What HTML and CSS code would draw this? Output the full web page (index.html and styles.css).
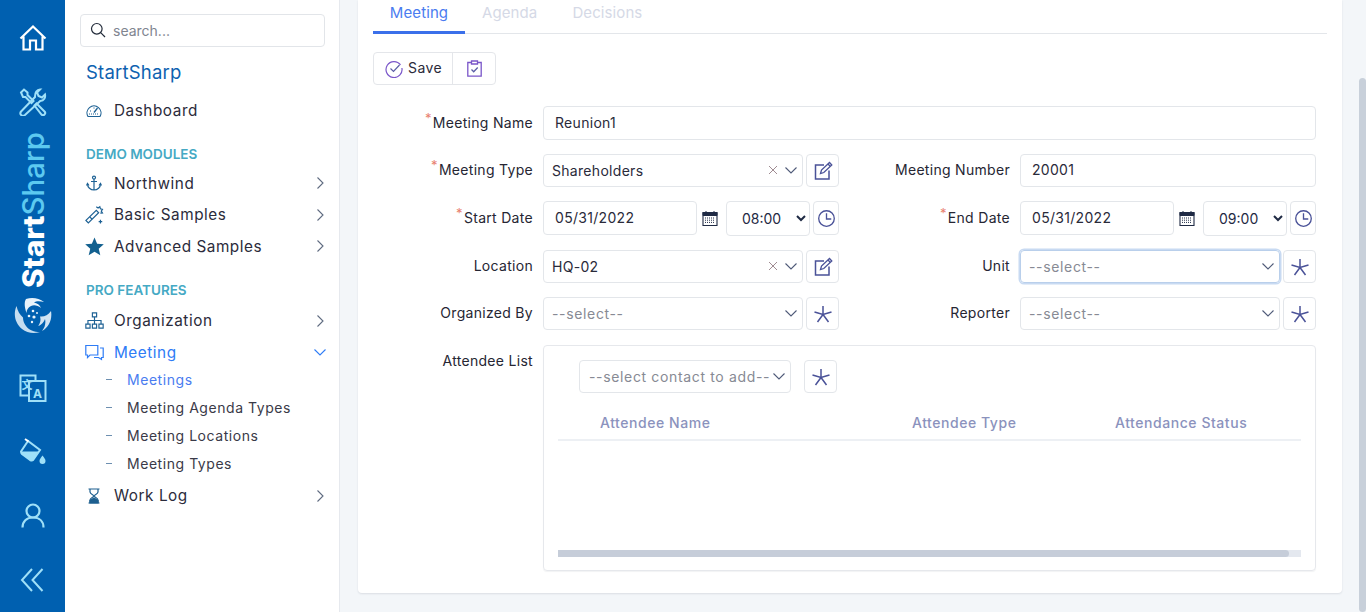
FILE: index.html
```html
<!DOCTYPE html>
<html lang="en">
<head>
    <meta charset="UTF-8">
    <title>Meeting - StartSharp</title>
    <link rel="stylesheet" href="styles.css">
</head>
<body>
    <svg class="defs" width="0" height="0">
        <symbol id="i-right" viewBox="0 0 10 14"><path d="M2.500 1.500 8 7l-5.500 5.500" fill="none" stroke="currentColor" stroke-width="1.100"/></symbol>
        <symbol id="i-down" viewBox="0 0 14 10"><path d="M1.500 2.500 7 8l5.500-5.500" fill="none" stroke="currentColor" stroke-width="1.100"/></symbol>
        <symbol id="i-x" viewBox="0 0 10 10"><path d="M1 1l8 8M9 1 1 9" fill="none" stroke="currentColor" stroke-width="1"/></symbol>
        <symbol id="i-edit" viewBox="0 0 20 20"><path d="M11 4H2.500v14h13.500V9.500" fill="none" stroke="currentColor" stroke-width="1.500"/><path d="M7.500 12.500l1-3.500 8-7.500 2.300 2.500-8 7.500zM15 3l2.400 2.500" fill="none" stroke="currentColor" stroke-width="1.300"/></symbol>
        <symbol id="i-star" viewBox="0 0 20 20"><path d="M10 2v8.500M1.500 8l8.500 2.500L18.500 8M10 10.500 4.500 18M10 10.500 15.500 18" fill="none" stroke="currentColor" stroke-width="1.500"/></symbol>
        <symbol id="i-clock" viewBox="0 0 20 20"><circle cx="10" cy="10" r="8.200" fill="none" stroke="currentColor" stroke-width="1.400"/><path d="M10 4.500V10.500H15" fill="none" stroke="currentColor" stroke-width="1.400"/></symbol>
        <symbol id="i-cal" viewBox="0 0 16 16"><path d="M1 2.500h14v13H1z" fill="none" stroke="currentColor" stroke-width="1.100"/><path d="M1 2.500h14V5.500H1zM4 1v2.500M12 1v2.500" fill="currentColor" stroke="currentColor" stroke-width="1"/><path d="M3 8h10M3 10.200h10M3 12.400h10" stroke="currentColor" stroke-width="1" stroke-dasharray="1 1"/></symbol>
    </svg>

    <div class="rail">
        <div class="rail-item">
            <svg class="rail-icon" viewBox="0 0 28 28"><path d="M1.500 14.500 14 2.500l12.500 12M4.500 12.500V25.500H11V16.500H17V25.500H23.500V12.500" fill="none" stroke="#fff" stroke-width="2.200"/></svg>
        </div>
        <div class="rail-item">
            <svg class="rail-icon" viewBox="0 0 28 28" fill="none" stroke="#9fe0f8" stroke-width="2"><path d="M2 4.500 5 1.500l3.500 3v2.500l6 6-2 2-6-6H4z"/><path d="M15.500 17.500l2-2 8 8c1 1 1 2 0 3s-2 1-3 0z"/><path d="M21 1.500l-3 3 1.500 3.500 3.500 1.500 3-3c.6 3-.8 6.200-4.800 6.500L6 27c-1.500 1-3 1-4-.2s-.7-2.600.3-3.600L16 9c-.2-4.200 2-7.500 5-7.500z"/></svg>
        </div>
        <div class="rail-brand">
            <div class="rail-name"><b>Start</b><span>Sharp</span></div>
            <svg class="rail-logo" viewBox="0 0 38 38" fill="#e8f3fb">
                <path d="M12 2c6-2 13-1 18 3-4-1-8-1-10 .5 3 .5 6 2.500 7 5.500-3-2.500-7-3.500-10-2-3 1.500-4.500 4-4.500 7C10.500 10 10 5 12 2z"/>
                <path d="M37 14c1.500 8-2 16-9 20 3-3.500 4-8 3-12-1 3-3.500 6-7 7 2.500-3 3-6.500 2-9.500 4 .5 8-1 11-5.500z" opacity=".9"/>
                <path d="M2.500 9C-1 17 1 26 8 32c5 4 12 5 18 3-6 0-11-2-14-6-2-2.500-3-5.500-3-8.500C6 18 3.500 14 2.500 9z" opacity=".85"/>
                <circle cx="19" cy="14" r="1.300"/><circle cx="15" cy="19" r="1.300"/><circle cx="20" cy="20" r="1.600"/><circle cx="18" cy="25" r="1.200"/><circle cx="23" cy="16" r="1"/>
            </svg>
        </div>
        <div class="rail-item">
            <svg class="rail-icon" viewBox="0 0 28 28">
                <path d="M1.500 1.500h15v20h-15z" fill="none" stroke="#9fe0f8" stroke-width="2"/>
                <path d="M10 7h16.500v20H10z" fill="#0060b0" stroke="#9fe0f8" stroke-width="2"/>
                <text x="2.500" y="14.500" class="glyph-cjk">文</text>
                <text x="14" y="24" class="glyph-latin">A</text>
            </svg>
        </div>
        <div class="rail-item">
            <svg class="rail-icon" viewBox="0 0 28 28">
                <path d="M9 3 2 13.500q0 1.500 1 2.500l8 6q2 1 3 0l7-10z" fill="none" stroke="#9fe0f8" stroke-width="2"/>
                <path d="M3 13.500h17.500L14 22q-1 1-3 0l-8-6z" fill="#9fe0f8"/>
                <path d="M9.500 3.500 6 1" stroke="#fff" stroke-width="2"/>
                <path d="M23.500 17.500c2 2.600 3 4 3 5.500a3 3 0 0 1-6 0c0-1.500 1-2.900 3-5.500z" fill="#9fe0f8"/>
            </svg>
        </div>
        <div class="rail-item">
            <svg class="rail-icon" viewBox="0 0 28 28" fill="none" stroke="#9fe0f8" stroke-width="2.200"><circle cx="14" cy="9" r="6.500"/><path d="M3.500 25.500c0-6 4-10 10.500-10s10.500 4 10.500 10"/></svg>
        </div>
        <div class="rail-item">
            <svg class="rail-icon" viewBox="0 0 28 28" fill="none" stroke="#9fe0f8" stroke-width="2"><path d="M13 3 3 14l10 11M23.500 3 13.500 14l10 11"/></svg>
        </div>
    </div>

    <div class="sidebar">
        <div class="search">
            <svg class="search-icon" viewBox="0 0 16 16" fill="none" stroke="#222b3a" stroke-width="1.200"><circle cx="6.800" cy="6.800" r="5.300"/><path d="M10.700 10.700 15 15"/></svg>
            <span>search...</span>
        </div>
        <div class="brand">StartSharp</div>

        <a class="nav-item">
            <svg class="nav-icon" viewBox="0 0 16 16" fill="none" stroke="#1d6194" stroke-width="1.100"><path d="M2 13.500A7 7 0 1 1 14 13.500z"/><path d="M8 9.500 11.500 5" stroke-width="1.300"/><path d="M4 8h1M8 4.500v1M3 11h10" stroke-dasharray="1 1"/></svg>
            Dashboard
        </a>

        <div class="section">DEMO MODULES</div>
        <a class="nav-item">
            <svg class="nav-icon" viewBox="0 0 16 16" fill="none" stroke="#1d6194" stroke-width="1.200"><circle cx="8" cy="2.600" r="1.500"/><path d="M8 4v11M5 6.500h6M1.500 9c0 3.500 3 6 6.500 6s6.500-2.500 6.500-6"/><path d="M.5 10.500 1.500 8.500l1.500 2M15.500 10.500l-1-2-1.500 2"/></svg>
            Northwind<svg class="chev"><use href="#i-right"/></svg>
        </a>
        <a class="nav-item">
            <svg class="nav-icon nav-icon-big" viewBox="0 0 16 16" fill="none" stroke="#1d6194" stroke-width="1"><path d="M.8 13 9.500 4.500l2 2L2.800 15z"/><path d="M9.500 1.500l1.500 1 1.500-1 .5 1.700 1.700.5-1 1.500 1 1.500-1.800.2"/><path d="M4 10l2 2M13 12.500v3M11.500 14h3" /></svg>
            Basic Samples<svg class="chev"><use href="#i-right"/></svg>
        </a>
        <a class="nav-item">
            <svg class="nav-icon nav-icon-big" viewBox="0 0 18 18"><path d="M9 .5l2.500 5.900 6.300.5-4.800 4.200 1.500 6.200L9 14l-5.500 3.300L5 11.100.2 6.900l6.300-.5z" fill="#12608f"/></svg>
            Advanced Samples<svg class="chev"><use href="#i-right"/></svg>
        </a>

        <div class="section section-pro">PRO FEATURES</div>
        <a class="nav-item">
            <svg class="nav-icon nav-icon-big" viewBox="0 0 18 16" fill="none" stroke="#1d6194" stroke-width="1.100"><path d="M7 .8h4v3.700H7zM.8 11.500h4v3.700h-4zM7 11.500h4v3.700H7zM13.200 11.500h4v3.700h-4zM9 4.500v7M2.800 11.500V8h12.400v3.500"/></svg>
            Organization<svg class="chev"><use href="#i-right"/></svg>
        </a>
        <a class="nav-item nav-active">
            <svg class="nav-icon nav-icon-big" viewBox="0 0 19 16" fill="none" stroke="#2e7cf6" stroke-width="1.200"><path d="M.8 1h12v9.500H5L2.500 13v-2.500H.8z"/><path d="M15 3.500h3.200v9.500h-1.700v2L13.500 13H9"/></svg>
            Meeting<svg class="chev chev-open"><use href="#i-down"/></svg>
        </a>
        <a class="sub-item sub-active">Meetings</a>
        <a class="sub-item">Meeting Agenda Types</a>
        <a class="sub-item">Meeting Locations</a>
        <a class="sub-item">Meeting Types</a>
        <a class="nav-item nav-after-sub">
            <svg class="nav-icon" viewBox="0 0 16 16" fill="none" stroke="#1d5f8f" stroke-width="1.200"><path d="M2.500 1h11M2.500 15h11M4 1v3c0 2 4 3 4 4s-4 2-4 4v3M12 1v3c0 2-4 3-4 4s4 2 4 4v3"/><path d="M4 15v-2.500L8 10l4 2.500V15z" fill="#1d5f8f"/></svg>
            Work Log<svg class="chev"><use href="#i-right"/></svg>
        </a>
    </div>

    <div class="main">
        <div class="card">
            <div class="tabs">
                <a class="tab tab-active">Meeting</a>
                <a class="tab">Agenda</a>
                <a class="tab">Decisions</a>
            </div>

            <div class="toolbar">
                <button class="tool-btn save-btn">
                    <svg class="save-icon" viewBox="0 0 18 18" fill="none" stroke="#7a56c9" stroke-width="1.200"><path d="M15.500 4.800A8 8 0 1 0 16.900 8"/><path d="M5.500 8.500 8.500 11.500 14.500 5" stroke="#5b5ea6"/></svg>
                    Save
                </button>
                <button class="tool-btn apply-btn">
                    <svg class="apply-icon" viewBox="0 0 15 17" fill="none" stroke="#7a56c9" stroke-width="1.300"><path d="M4.500 2.500H.8v13.700h13.400V2.500H10.500"/><path d="M4.500 1h6v3h-6z"/><path d="M4.500 9.500l2.200 2.200 4-4.200" stroke="#5b5ea6"/></svg>
                </button>
            </div>

            <div class="form">
                <label class="lbl"><i>*</i>Meeting Name</label>
                <input class="field wide name-input" value="Reunion1">

                <label class="lbl"><i>*</i>Meeting Type</label>
                <div class="ctl">
                    <div class="combo">Shareholders<svg class="clear"><use href="#i-x"/></svg><svg class="arrow"><use href="#i-down"/></svg></div>
                    <button class="ico-btn"><svg class="ico"><use href="#i-edit"/></svg></button>
                </div>
                <label class="lbl">Meeting Number</label>
                <input class="field" value="20001">

                <label class="lbl"><i>*</i>Start Date</label>
                <div class="ctl ctl-date">
                    <input class="field date" value="05/31/2022">
                    <svg class="cal"><use href="#i-cal"/></svg>
                    <select class="time"><option>08:00</option></select>
                    <button class="ico-btn clock-btn"><svg class="ico-clock"><use href="#i-clock"/></svg></button>
                </div>
                <label class="lbl"><i>*</i>End Date</label>
                <div class="ctl ctl-date">
                    <input class="field date" value="05/31/2022">
                    <svg class="cal"><use href="#i-cal"/></svg>
                    <select class="time"><option>09:00</option></select>
                    <button class="ico-btn clock-btn"><svg class="ico-clock"><use href="#i-clock"/></svg></button>
                </div>

                <label class="lbl">Location</label>
                <div class="ctl">
                    <div class="combo">HQ-02<svg class="clear"><use href="#i-x"/></svg><svg class="arrow"><use href="#i-down"/></svg></div>
                    <button class="ico-btn"><svg class="ico"><use href="#i-edit"/></svg></button>
                </div>
                <label class="lbl">Unit</label>
                <div class="ctl">
                    <div class="combo combo-empty combo-focus">--select--<svg class="arrow"><use href="#i-down"/></svg></div>
                    <button class="ico-btn"><svg class="ico"><use href="#i-star"/></svg></button>
                </div>

                <label class="lbl">Organized By</label>
                <div class="ctl">
                    <div class="combo combo-empty">--select--<svg class="arrow"><use href="#i-down"/></svg></div>
                    <button class="ico-btn"><svg class="ico"><use href="#i-star"/></svg></button>
                </div>
                <label class="lbl">Reporter</label>
                <div class="ctl">
                    <div class="combo combo-empty">--select--<svg class="arrow"><use href="#i-down"/></svg></div>
                    <button class="ico-btn"><svg class="ico"><use href="#i-star"/></svg></button>
                </div>

                <label class="lbl lbl-top">Attendee List</label>
                <div class="attendees">
                    <div class="att-tools">
                        <div class="combo combo-empty att-combo">--select contact to add--<svg class="arrow"><use href="#i-down"/></svg></div>
                        <button class="ico-btn"><svg class="ico"><use href="#i-star"/></svg></button>
                    </div>
                    <div class="grid-head">
                        <span class="col-name">Attendee Name</span>
                        <span class="col-type">Attendee Type</span>
                        <span>Attendance Status</span>
                    </div>
                    <div class="grid-body"></div>
                    <div class="hscroll"><div class="hscroll-thumb"></div></div>
                </div>
            </div>
        </div>
        <div class="vscroll"><div class="vscroll-thumb"></div></div>
    </div>
</body>
</html>
```

FILE: styles.css
```css
* {
    margin: 0;
    padding: 0;
    box-sizing: border-box;
}

body {
    font-family: Inter, "Liberation Sans", sans-serif;
    font-size: 14px;
    color: #2a2a3a;
    background-color: #f3f6f9;
    display: flex;
    height: 612px;
    overflow: hidden;
}

.defs {
    position: absolute;
}

/* left icon rail */
.rail {
    width: 65px;
    flex: none;
    padding-top: 6px;
    background-color: #0060b0;
}

.rail-item {
    height: 64px;
    display: flex;
    align-items: center;
    justify-content: center;
}

.rail-icon {
    width: 28px;
    height: 28px;
}

.glyph-cjk {
    font-family: "Noto Sans CJK SC", sans-serif;
    font-size: 11px;
    font-weight: 700;
    fill: #9fe0f8;
}

.glyph-latin {
    font-family: Inter, sans-serif;
    font-size: 12px;
    font-weight: 700;
    fill: #9fe0f8;
}

.rail-brand {
    height: 222px;
    display: flex;
    flex-direction: column;
    align-items: center;
}

.rail-name {
    writing-mode: vertical-rl;
    transform: rotate(180deg);
    height: 156px;
    margin-top: -2px;
    font-size: 29.500px;
    line-height: 30px;
    text-align: left;
    white-space: nowrap;
}

.rail-name b {
    color: #fff;
    font-weight: 800;
}

.rail-name span {
    color: #5cc9f0;
    font-weight: 500;
}

.rail-logo {
    width: 38px;
    height: 38px;
    margin-top: 9px;
}

/* tree sidebar */
.sidebar {
    width: 275px;
    flex: none;
    padding: 14px 14px 0 15px;
    background-color: #fff;
    border-right: 1px solid #e6e9ee;
}

.search {
    height: 33px;
    display: flex;
    align-items: center;
    gap: 7px;
    padding: 0 0 1px 9px;
    border: 1px solid #e2e5e9;
    border-radius: 4px;
    color: #808590;
    font-size: 14px;
}

.search-icon {
    width: 16px;
    height: 16px;
}

.brand {
    height: 26px;
    margin: 12px 0 10px 6px;
    font-size: 18.500px;
    line-height: 26px;
    color: #0d62b0;
    letter-spacing: 0.2px;
}

.nav-item {
    height: 31.5px;
    display: flex;
    align-items: center;
    padding: 0 0 0 6px;
    font-size: 15.300px;
    letter-spacing: 0.55px;
    color: #2b2b3b;
}

.nav-after-sub {
    margin-top: 3px;
}

.nav-icon {
    width: 16px;
    height: 16px;
    flex: none;
    margin-right: 12px;
}

.nav-icon-big {
    width: 19px;
    height: 19px;
    margin: 0 10px 0 -1px;
}

.chev {
    width: 10px;
    height: 14px;
    margin-left: auto;
    color: #5f6b80;
}

.chev-open {
    width: 14px;
    height: 10px;
    margin-right: -2px;
    color: #2e7cf6;
}

.nav-active {
    color: #2e7cf6;
}

.section {
    height: 20px;
    margin: 17px 0 4px 6px;
    font-size: 13.500px;
    font-weight: 600;
    line-height: 20px;
    color: #45a9c4;
}

.section-pro {
    margin: 18px 0 5px 6px;
}

.sub-item {
    height: 28px;
    display: flex;
    align-items: center;
    padding-left: 47px;
    position: relative;
    font-size: 14px;
    letter-spacing: 0.55px;
    color: #3a3a48;
}

.sub-item::before {
    content: "";
    position: absolute;
    left: 26px;
    top: 14px;
    width: 6px;
    height: 1px;
    background-color: #6d8fb0;
}

.nav-active + .sub-item {
    margin-top: -3px;
}

.sub-active {
    color: #4a7cf0;
}

/* main area */
.main {
    flex: 1;
    display: flex;
    padding-left: 18px;
}

.card {
    width: 984px;
    height: 593px;
    padding: 0 15px;
    background-color: #fff;
    border-radius: 0 0 4px 4px;
    box-shadow: 0 1px 2px rgba(40, 50, 70, 0.12);
}

.tabs {
    height: 34px;
    display: flex;
    border-bottom: 1px solid #e3e6ea;
}

.tab {
    height: 34px;
    padding: 0 18px 0 17px;
    font-size: 15px;
    letter-spacing: 0.1px;
    line-height: 25px;
    color: #d5d9e6;
}

.tab-active {
    width: 92px;
    padding: 0;
    text-align: center;
    color: #4a7cf0;
    border-bottom: 3px solid #3b70ea;
}

.toolbar {
    display: flex;
    width: 123px;
    height: 33px;
    margin-top: 18px;
    border: 1px solid #e4e6ea;
    border-radius: 4px;
}

.tool-btn {
    display: flex;
    align-items: center;
    border: none;
    background: none;
    font-family: inherit;
    font-size: 14px;
    letter-spacing: 0.4px;
    color: #2a2a3a;
}

.save-btn {
    width: 79px;
    gap: 5px;
    padding: 0 0 2px 11px;
    border-right: 1px solid #e4e6ea;
}

.save-icon {
    width: 18px;
    height: 18px;
    margin-top: 2px;
}

.apply-btn {
    flex: 1;
    justify-content: center;
}

.apply-icon {
    width: 15px;
    height: 17px;
}

/* form grid */
.form {
    display: grid;
    grid-template-columns: 160px 296px 161px 296px;
    grid-template-rows: 34px 33px 35px 33px 33px 227px;
    gap: 14px 10px;
    margin-top: 21px;
}

.lbl {
    align-self: center;
    margin-bottom: 2px;
    text-align: right;
    font-size: 14px;
    letter-spacing: 0.3px;
    color: #262633;
    white-space: nowrap;
}

.lbl i {
    position: relative;
    top: -5px;
    margin-right: 1px;
    font-style: normal;
    font-size: 13px;
    color: #e8806f;
}

.lbl-top {
    align-self: start;
    margin: 8px 0 0;
}

.field {
    width: 100%;
    height: 33px;
    padding: 0 11px 2px;
    border: 1px solid #e3e6ea;
    border-radius: 4px;
    font-family: inherit;
    font-size: 14px;
    letter-spacing: 0.3px;
    color: #2a2a3a;
    outline: none;
}

.wide {
    grid-column: 2 / 5;
}

.name-input {
    height: 34px;
}

.ctl {
    display: flex;
    gap: 3px;
}

.ctl-date {
    align-items: flex-start;
}

.combo {
    flex: 1;
    height: 33px;
    display: flex;
    align-items: center;
    padding: 0 4px 1px 8px;
    border: 1px solid #e3e6ea;
    border-radius: 4px;
    font-size: 14px;
    letter-spacing: 0.3px;
    color: #2a2a3a;
    white-space: nowrap;
}

.combo-empty {
    letter-spacing: 0.65px;
    color: #878a94;
}

.combo-focus {
    border-color: #b9cfeb;
    box-shadow: 0 0 0 1.500px #c8daf2;
}

.clear {
    width: 10px;
    height: 10px;
    margin-left: auto;
    color: #a08c92;
}

.arrow {
    width: 14px;
    height: 10px;
    margin-left: auto;
    color: #4f5a78;
}

.clear + .arrow {
    margin-left: 6px;
}

.ico-btn {
    width: 33px;
    height: 33px;
    flex: none;
    display: flex;
    align-items: center;
    justify-content: center;
    background: #fff;
    border: 1px solid #e3e6ea;
    border-radius: 4px;
    color: #4a5298;
}

.ico {
    width: 20px;
    height: 20px;
}

.date {
    width: 154px;
    height: 34px;
}

.cal {
    width: 16px;
    height: 16px;
    flex: none;
    margin: 9px 5px 0 2px;
    color: #1f2a44;
}

.time {
    width: 84px;
    height: 35px;
    flex: none;
    padding-left: 11px;
    background: #fff;
    border: 1px solid #e3e6ea;
    border-radius: 4px;
    font-family: inherit;
    font-size: 14px;
    color: #1f2a44;
}

.clock-btn {
    width: 26px;
    height: 34px;
}

.ico-clock {
    width: 19px;
    height: 19px;
    flex: none;
}

/* attendee editor */
.attendees {
    grid-column: 2 / 5;
    margin-top: 1px;
    height: 226px;
    padding: 14px 14px 0;
    border: 1px solid #e6e8ec;
    border-radius: 4px;
    box-shadow: 0 1px 1px rgba(40, 50, 70, 0.06);
}

.att-tools {
    display: flex;
    gap: 13px;
    padding-left: 21px;
}

.att-combo {
    flex: none;
    width: 212px;
    padding-left: 9px;
}

.grid-head {
    height: 48px;
    display: flex;
    align-items: center;
    padding: 13px 0 0 42px;
    border-bottom: 2px solid #edf0f4;
    font-size: 14px;
    font-weight: 500;
    letter-spacing: 0.55px;
    color: #8b92bd;
}

.col-name {
    width: 312px;
}

.col-type {
    width: 203px;
}

.grid-body {
    height: 109px;
}

.hscroll {
    height: 7px;
    background-color: #e4e8ef;
}

.hscroll-thumb {
    width: 731px;
    height: 7px;
    background-color: #c6cdd9;
    border-radius: 0 4px 4px 0;
}

.vscroll {
    width: 7px;
    margin-left: auto;
}

.vscroll-thumb {
    height: 534px;
    margin-top: 78px;
    background-color: #c8d0da;
    border-radius: 4px;
}
```
